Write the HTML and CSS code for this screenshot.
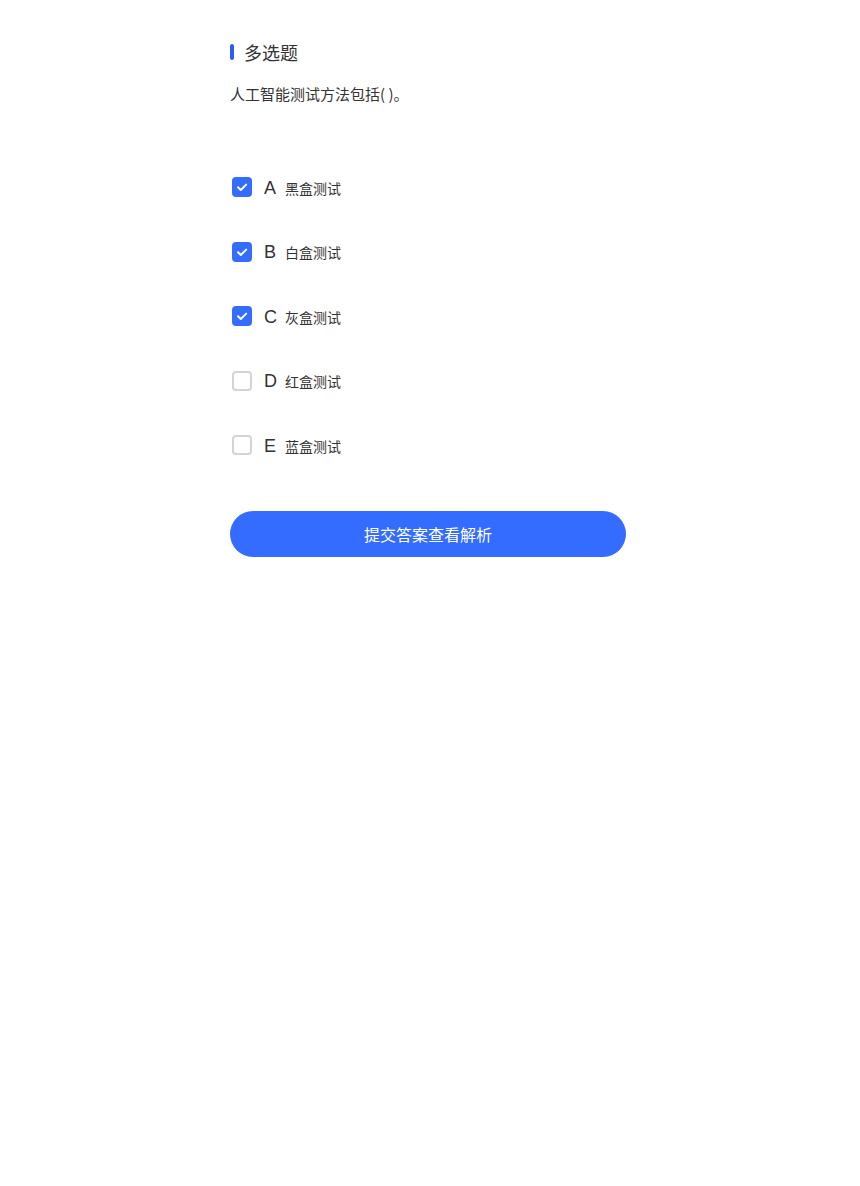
FILE: index.html
```html
<!DOCTYPE html>
<html lang="zh">
<head>
<meta charset="utf-8">
<link rel="stylesheet" href="styles.css">
</head>
<body>
<div class="page">
  <div class="title"><span class="bar"></span><span class="title-text">多选题</span></div>
  <div class="question">人工智能测试方法包括( )。</div>
  <ul class="options">
    <li class="option"><span class="box checked"><svg viewBox="0 0 20 20" width="20" height="20"><path d="M6 10.2l2.8 2.8L14.2 7.6" fill="none" stroke="#fff" stroke-width="2" stroke-linecap="round" stroke-linejoin="round"/></svg></span><span class="text"><span class="letter">A</span><span class="label">黑盒测试</span></span></li>
    <li class="option"><span class="box checked"><svg viewBox="0 0 20 20" width="20" height="20"><path d="M6 10.2l2.8 2.8L14.2 7.6" fill="none" stroke="#fff" stroke-width="2" stroke-linecap="round" stroke-linejoin="round"/></svg></span><span class="text"><span class="letter">B</span><span class="label">白盒测试</span></span></li>
    <li class="option"><span class="box checked"><svg viewBox="0 0 20 20" width="20" height="20"><path d="M6 10.2l2.8 2.8L14.2 7.6" fill="none" stroke="#fff" stroke-width="2" stroke-linecap="round" stroke-linejoin="round"/></svg></span><span class="text"><span class="letter">C</span><span class="label">灰盒测试</span></span></li>
    <li class="option"><span class="box"></span><span class="text"><span class="letter">D</span><span class="label">红盒测试</span></span></li>
    <li class="option"><span class="box"></span><span class="text"><span class="letter">E</span><span class="label">蓝盒测试</span></span></li>
  </ul>
  <button class="submit">提交答案查看解析</button>
</div>
</body>
</html>
```

FILE: styles.css
```css
html, body {
  margin: 0;
  padding: 0;
  background: #fff;
}
body {
  font-family: "Noto Sans CJK SC", "Liberation Sans", sans-serif;
  color: #333;
}
.page {
  width: 396px;
  margin-left: calc(50% - 200px);
  padding-top: 40px;
}
.title {
  display: flex;
  align-items: center;
  height: 24px;
}
.bar {
  width: 4px;
  height: 16px;
  border-radius: 2px;
  background: #2f5bf5;
  margin-right: 10px;
}
.title-text {
  font-size: 18px;
  line-height: 24px;
  color: #333;
}
.question {
  margin-top: 19px;
  font-size: 15px;
  line-height: 22px;
  color: #333;
}
.options {
  list-style: none;
  margin: 72px 0 0;
  padding: 0;
  display: flex;
  flex-direction: column;
  gap: 44.5px;
}
.option {
  display: flex;
  align-items: center;
  height: 20px;
}
.box {
  width: 20px;
  height: 20px;
  box-sizing: border-box;
  border: 2px solid #d4d4d4;
  border-radius: 4px;
  margin-left: 2px;
  margin-right: 12px;
  position: relative;
}
.box.checked {
  background: #336cff;
  border-color: #336cff;
}
.box svg {
  position: absolute;
  left: -2px;
  top: -2px;
}
.text {
  display: flex;
  align-items: baseline;
  padding-top: 2px;
}
.letter {
  font-family: "Liberation Sans", Arial, sans-serif;
  font-size: 18px;
  color: #333;
  width: 21px;
}
.label {
  font-size: 14px;
  color: #333;
}
.submit {
  display: block;
  margin-top: 56px;
  width: 396px;
  height: 46px;
  border: none;
  border-radius: 23px;
  background: #336cff;
  color: #fff;
  font-family: "Noto Sans CJK SC", sans-serif;
  font-size: 16px;
  cursor: pointer;
}
```
